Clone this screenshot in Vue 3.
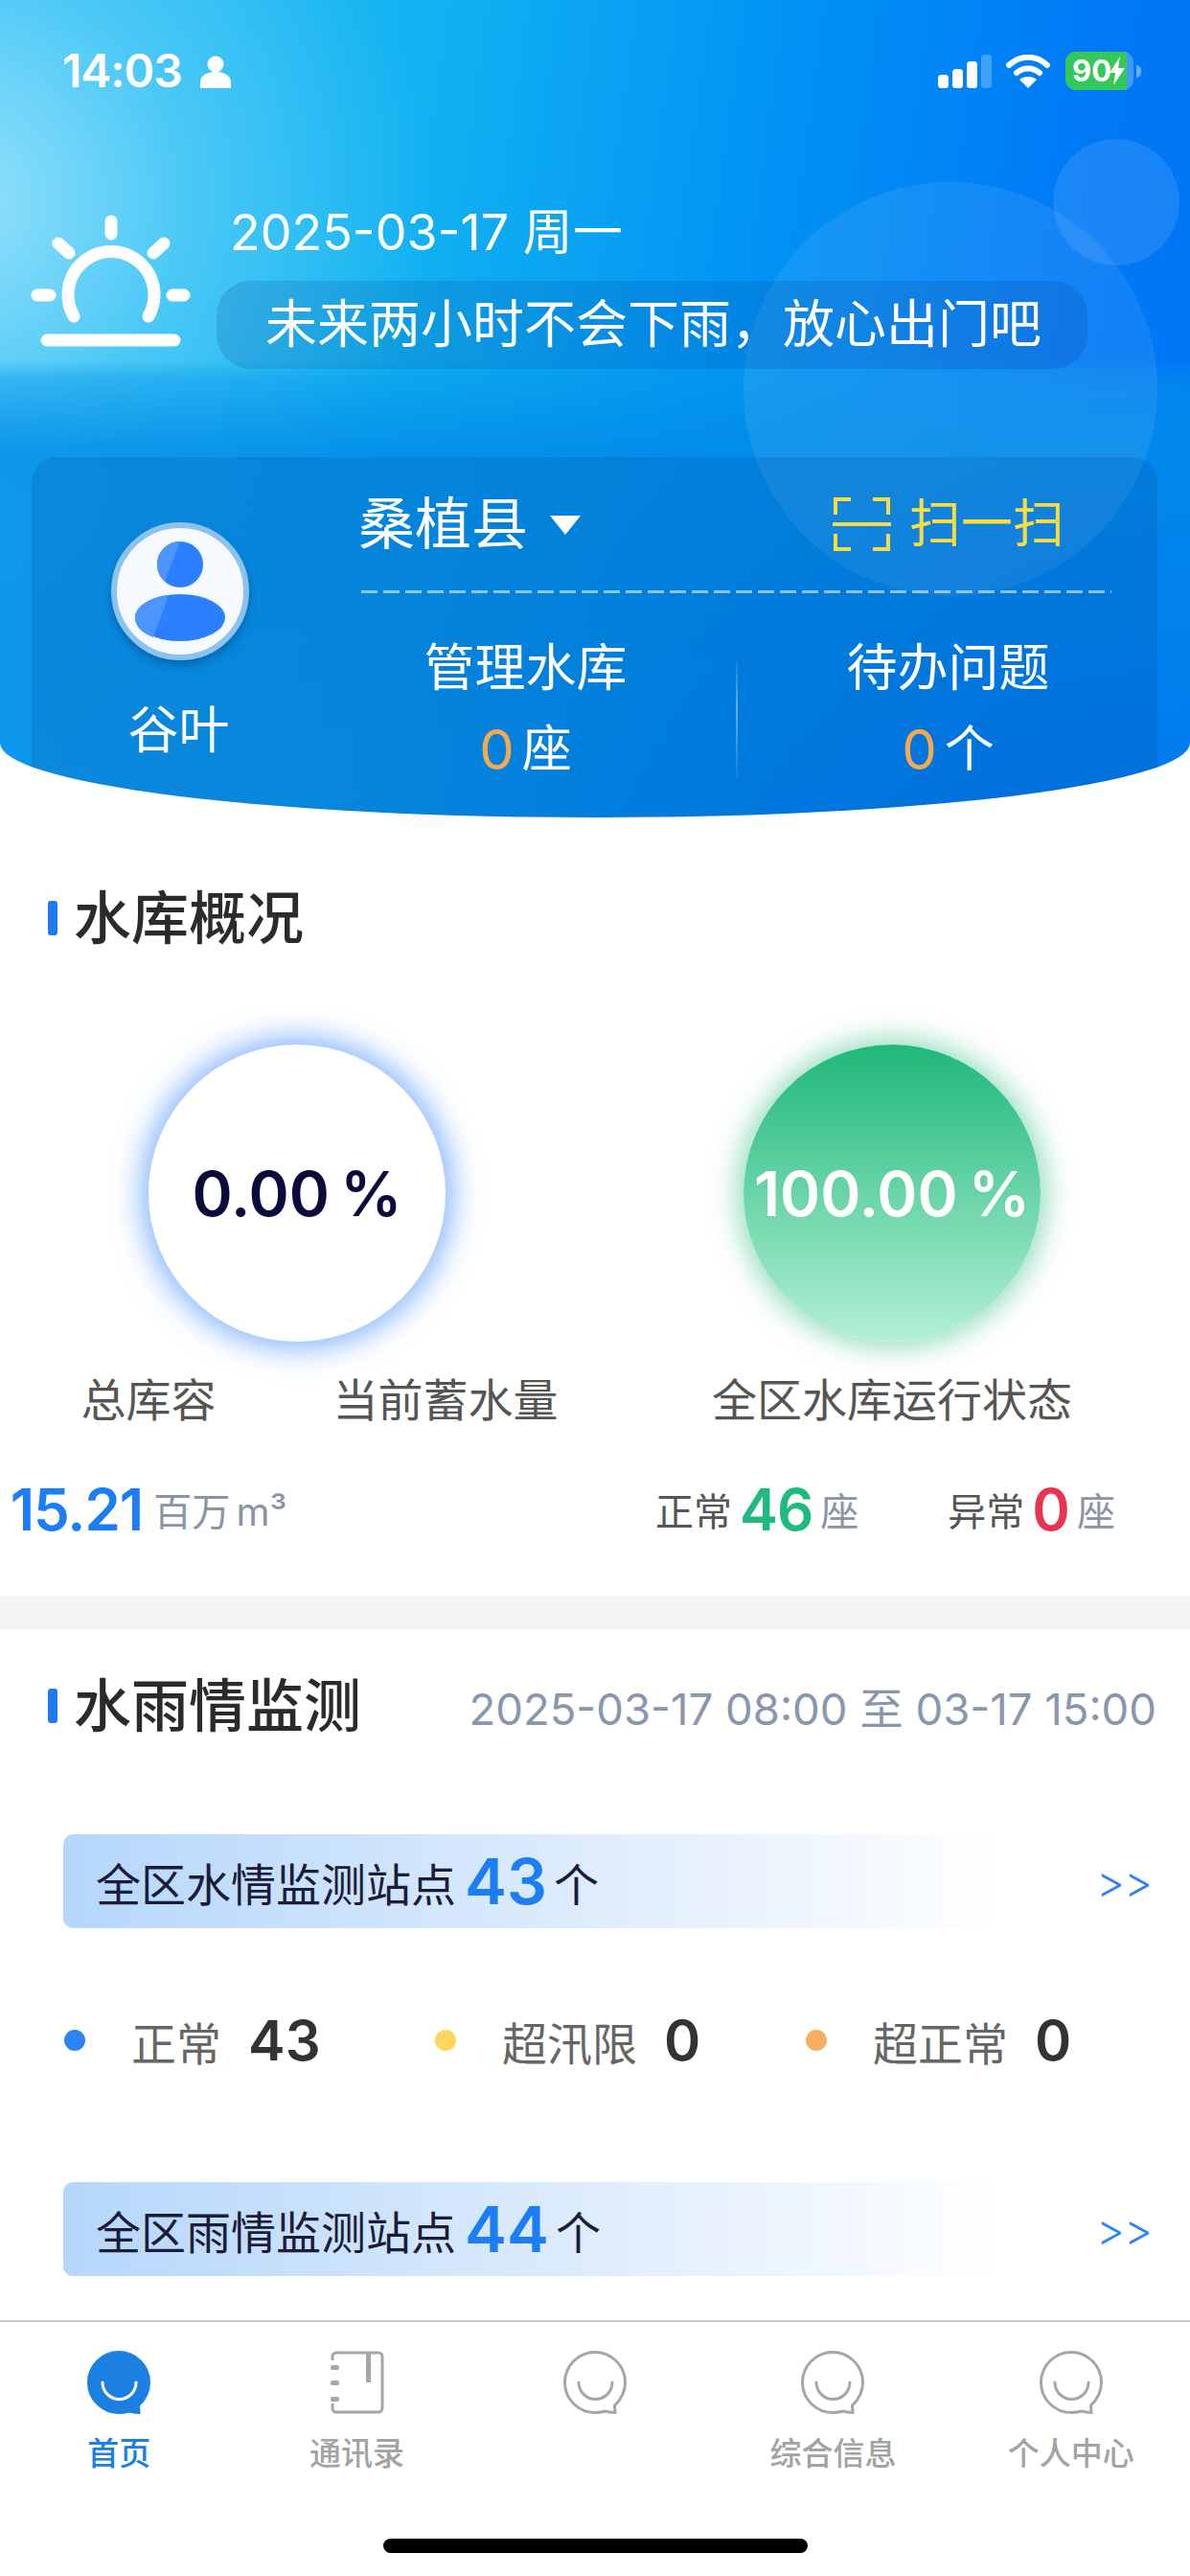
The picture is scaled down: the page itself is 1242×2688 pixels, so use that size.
<script setup>
const stations = [
  { label: '正常', value: 43, color: '#2b84f0' },
  { label: '超汛限', value: 0, color: '#fbd75e' },
  { label: '超正常', value: 0, color: '#f9ae62' },
]
const tabs = [
  { label: '首页', kind: 'solid' },
  { label: '通讯录', kind: 'book' },
  { label: '', kind: 'line' },
  { label: '综合信息', kind: 'line' },
  { label: '个人中心', kind: 'line' },
]
const bubble = 'M33 1.5C15.6 1.5 1.5 15.6 1.5 33S15.6 64.5 33 64.5c4 0 8-.8 11-1.5 3 .8 7 1.300 10 1.500l-.5-7.500C60.500 50.500 64.500 42 64.500 33 64.500 15.600 50.400 1.500 33 1.500z'
</script>

<template>
  <div class="app">
    <header class="hero">
      <i class="orb orb-big"></i>
      <i class="orb orb-small"></i>

      <div class="status">
        <div class="status-left">
          <span class="clock">14:03</span>
          <svg class="status-person" viewBox="0 0 32 34" width="32" height="34">
            <circle cx="16" cy="9" r="8.5" fill="#fff" />
            <path d="M0 34v-6c0-7 6-11 16-11s16 4 16 11v6z" fill="#fff" />
          </svg>
        </div>
        <div class="status-right">
          <svg viewBox="0 0 56 35" width="56" height="35">
            <rect x="0" y="21" width="11" height="14" rx="3.5" fill="#fff" />
            <rect x="15" y="15" width="11" height="20" rx="3.5" fill="#fff" />
            <rect x="30" y="7" width="11" height="28" rx="3.5" fill="#fff" />
            <rect x="45" y="0" width="11" height="35" rx="3.5" fill="#fff" fill-opacity=".25" />
          </svg>
          <svg class="wifi" viewBox="0 0 46 35" width="46" height="35">
            <path d="M3 11C15 0 31 0 43 11" fill="none" stroke="#fff" stroke-width="6" stroke-linecap="round" />
            <path d="M11 19c7-6 17-6 24 0" fill="none" stroke="#fff" stroke-width="6" stroke-linecap="round" />
            <path d="M23 35l-9-9c5-4 13-4 18 0z" fill="#fff" />
          </svg>
          <div class="battery">
            <div class="battery-fill">
              <span>90</span>
              <svg viewBox="0 0 16 30" width="16" height="30">
                <path d="M11 0L0 17h6l-2 13L16 12H9z" fill="#fff" />
              </svg>
            </div>
          </div>
          <i class="battery-nub"></i>
        </div>
      </div>

      <div class="weather">
        <svg class="sun" viewBox="0 0 200 180" width="200" height="180">
          <g fill="none" stroke="#fff" stroke-linecap="round" stroke-width="13">
            <path d="M57 130A45 45 0 1 1 135 130" />
            <path d="M96 31V44M41 54L52 64M151 54L140 64M19 108H32M160 108H172M29 155H162" />
          </g>
        </svg>
        <div class="weather-text">
          <div class="date">2025-03-17 周一</div>
          <div class="pill">未来两小时不会下雨，放心出门吧</div>
        </div>
      </div>

      <section class="card">
        <div class="user">
          <div class="avatar">
            <svg viewBox="0 0 96 104" width="96" height="104">
              <circle cx="48" cy="24" r="24" fill="#2a80ff" />
              <path d="M48 0A24 24 0 0 0 32 42L48 0z" fill="#4d94ff" />
              <ellipse cx="48" cy="79.500" rx="47" ry="24.500" fill="#2a80ff" />
              <path d="M36 56L20 100C8 96 1 88 1 79.500 1 68 16 58 36 56z" fill="#4d94ff" />
            </svg>
          </div>
          <div class="user-name">谷叶</div>
        </div>
        <div class="info">
          <div class="info-top">
            <div class="county">
              <span>桑植县</span>
              <i class="caret"></i>
            </div>
            <div class="scan">
              <svg viewBox="0 0 61 56" width="61" height="56">
                <g fill="none" stroke="#f8dc44" stroke-width="4">
                  <path d="M19 2H3v16M42 2h16v16M3 38v16h16M58 38v16H42" />
                  <path d="M1 28H60" stroke-linecap="round" />
                </g>
              </svg>
              <span>扫一扫</span>
            </div>
          </div>
          <div class="dash"></div>
          <div class="stats">
            <div class="stat">
              <div class="stat-label">管理水库</div>
              <div class="stat-value"><b>0</b>座</div>
            </div>
            <i class="stat-divider"></i>
            <div class="stat">
              <div class="stat-label">待办问题</div>
              <div class="stat-value"><b>0</b>个</div>
            </div>
          </div>
        </div>
      </section>
    </header>

    <main class="main">
      <section class="overview">
        <h2 class="title">水库概况</h2>
        <div class="gauges">
          <div class="gauge-col">
            <div class="gauge gauge-blue">0.00 %</div>
            <div class="pair">
              <div class="gauge-label">总库容</div>
              <div class="gauge-label">当前蓄水量</div>
            </div>
            <div class="pair">
              <div class="metric"><b class="num-blue">15.21</b><span class="unit">百万 m³</span></div>
            </div>
          </div>
          <div class="gauge-col">
            <div class="gauge gauge-green">100.00 %</div>
            <div class="gauge-label">全区水库运行状态</div>
            <div class="status-counts">
              <div class="metric"><em>正常</em><b class="num-green">46</b><span>座</span></div>
              <div class="metric"><em>异常</em><b class="num-red">0</b><span>座</span></div>
            </div>
          </div>
        </div>
      </section>

      <div class="band"></div>

      <section class="monitor">
        <div class="monitor-head">
          <h2 class="title">水雨情监测</h2>
          <span class="range">2025-03-17 08:00 至 03-17 15:00</span>
        </div>

        <div class="banner-row first">
          <div class="banner">全区水情监测站点<b>43</b>个</div>
          <span class="more">&gt;&gt;</span>
        </div>
        <div class="station-row">
          <div v-for="s in stations" :key="s.label" class="station">
            <i class="dot" :style="{ background: s.color }"></i>
            <span class="station-label">{{ s.label }}</span>
            <b class="station-value">{{ s.value }}</b>
          </div>
        </div>
        <div class="banner-row second">
          <div class="banner">全区雨情监测站点<b>44</b>个</div>
          <span class="more">&gt;&gt;</span>
        </div>
      </section>
    </main>

    <footer class="tabbar">
      <nav class="tabs">
        <div v-for="t in tabs" :key="t.label + t.kind" class="tab" :class="{ active: t.kind === 'solid' }">
          <svg v-if="t.kind === 'book'" viewBox="0 0 66 66" width="66" height="66">
            <g fill="none" stroke="#a6a6a6" stroke-width="3">
              <path d="M7 10V6a4 4 0 0 1 4-4h44a4 4 0 0 1 4 4v54a4 4 0 0 1-4 4H11a4 4 0 0 1-4-4v-5" />
            </g>
            <rect x="42" y="2" width="5" height="31" fill="#a6a6a6" />
            <rect x="5" y="15" width="9" height="5" rx="2" fill="#a6a6a6" />
            <rect x="5" y="31" width="9" height="5" rx="2" fill="#a6a6a6" />
            <rect x="5" y="48" width="9" height="5" rx="2" fill="#a6a6a6" />
          </svg>
          <svg v-else viewBox="0 0 66 66" width="66" height="66">
            <path
              :d="bubble"
              :fill="t.kind === 'solid' ? '#1b80e2' : 'none'"
              :stroke="t.kind === 'solid' ? '#1b80e2' : '#a6a6a6'"
              stroke-width="3"
            />
            <path
              d="M16 33a17.500 17.500 0 0 0 35 0"
              fill="none"
              :stroke="t.kind === 'solid' ? '#fff' : '#a6a6a6'"
              stroke-width="3"
              stroke-linecap="round"
            />
          </svg>
          <span class="tab-label">{{ t.label }}</span>
        </div>
      </nav>
      <div class="home-indicator"></div>
    </footer>
  </div>
</template>

<style>
html, body { margin: 0; background: #fff; }
</style>

<style scoped>
.app {
  width: 1242px;
  height: 2688px;
  display: flex;
  flex-direction: column;
  overflow: hidden;
  background: #fff;
  font-family: Inter, "Noto Sans CJK SC", sans-serif;
  color: #333;
}
h2, b, em, i { margin: 0; font-style: normal; }

.hero {
  position: relative;
  flex: none;
  height: 853px;
  overflow: hidden;
  color: #fff;
  border-radius: 0 0 50% 50% / 0 0 78px 78px;
  background:
    linear-gradient(180deg, rgba(5, 150, 232, 0) 0 376px, rgba(5, 150, 232, .42) 394px, rgba(2, 140, 232, .82) 470px, rgba(0, 125, 232, .55) 100%),
    radial-gradient(ellipse 500px 470px at -50px 210px, rgba(170, 232, 252, .85), rgba(130, 220, 250, .45) 50%, rgba(60, 190, 245, 0) 100%),
    linear-gradient(98deg, #25bbf4 0%, #13b3f1 32%, #0092f5 62%, #0079f6 85%, #0075f5 100%);
}
.orb { position: absolute; border-radius: 50%; background: rgba(255, 255, 255, .08); }
.orb-big { left: 776px; top: 190px; width: 432px; height: 432px; }
.orb-small { left: 1099px; top: 145px; width: 132px; height: 132px; background: rgba(255, 255, 255, .1); }

.status {
  position: relative;
  height: 40px;
  padding: 54px 51px 0 65px;
  display: flex;
  justify-content: space-between;
  align-items: center;
}
.status-left { display: flex; align-items: center; gap: 19px; }
.clock { font-size: 48px; font-weight: 600; line-height: 40px; letter-spacing: -1px; }
.status-person { margin-top: 2px; }
.status-right { display: flex; align-items: center; }
.wifi { margin-left: 15px; }
.battery {
  margin-left: 16px;
  width: 71px;
  height: 40px;
  border-radius: 11px;
  background: rgba(255, 255, 255, .25);
  overflow: hidden;
}
.battery-fill {
  width: 64px;
  height: 40px;
  padding-left: 7px;
  box-sizing: border-box;
  background: #34c759;
  display: flex;
  align-items: center;
  font-size: 31px;
  font-weight: 700;
  line-height: 40px;
  white-space: nowrap;
}
.battery-fill svg { flex: none; margin-left: -2px; }
.battery-nub {
  width: 5px;
  height: 13px;
  margin-left: 3px;
  border-radius: 0 5px 5px 0;
  background: rgba(255, 255, 255, .4);
}

.weather {
  position: relative;
  display: flex;
  height: 185px;
  margin-top: 106px;
  padding-left: 20px;
}
.sun { flex: none; }
.weather-text { flex: none; width: 909px; margin-left: 6px; }
.date { height: 93px; padding: 15px 0 0 14px; box-sizing: border-box; font-size: 52px; line-height: 56px; white-space: nowrap; }
.pill {
  height: 92px;
  padding-left: 51px;
  box-sizing: border-box;
  border-radius: 36px;
  background: rgba(0, 60, 140, .17);
  font-size: 54px;
  line-height: 92px;
  white-space: nowrap;
}

.card {
  position: relative;
  margin: 92px 34px 0 33px;
  height: 400px;
  display: flex;
  border-radius: 26px 26px 0 0;
  background: rgba(0, 50, 130, .14);
}
.user { flex: none; width: 310px; display: flex; flex-direction: column; align-items: center; padding-top: 68px; box-sizing: border-box; }
.avatar {
  width: 144px;
  height: 144px;
  box-sizing: border-box;
  border: 6px solid #8cc2ee;
  border-radius: 50%;
  background: #f6faff;
  box-shadow: 0 5px 8px rgba(0, 40, 100, .35);
  display: flex;
  align-items: center;
  justify-content: center;
}
.user-name { margin-top: 43px; font-size: 53px; line-height: 60px; margin-right: 3px; }

.info { flex: none; width: 783px; margin-left: 34px; padding-top: 35px; }
.info-top { height: 70px; display: flex; justify-content: space-between; align-items: center; padding-right: 49px; }
.county { display: flex; align-items: center; gap: 23px; margin-left: -3px; font-size: 59px; line-height: 70px; }
.caret {
  width: 0;
  height: 0;
  margin-top: 2px;
  border-left: 16px solid transparent;
  border-right: 16px solid transparent;
  border-top: 20px solid #fff;
}
.scan { display: flex; align-items: center; gap: 19px; color: #f8dc44; font-size: 54px; line-height: 70px; }
.dash {
  height: 3px;
  margin-top: 34px;
  background: repeating-linear-gradient(90deg, rgba(255, 255, 255, .55) 0 17px, transparent 17px 23px);
}
.stats { display: flex; width: 880px; margin: 46px 0 0 -48px; position: relative; }
.stat { flex: 1; text-align: center; }
.stat-label { font-size: 53px; line-height: 64px; }
.stat-value { margin-top: 21px; font-size: 52px; line-height: 64px; display: flex; justify-content: center; align-items: center; gap: 8px; }
.stat-value b { font-weight: 400; font-size: 58px; color: #f5a94c; }
.stat-divider {
  flex: none;
  width: 2px;
  height: 124px;
  margin-top: 24px;
  background: linear-gradient(180deg, rgba(255, 255, 255, .05), rgba(255, 255, 255, .4) 40%, rgba(255, 255, 255, .05));
}

.main { flex: 1; min-height: 0; overflow: hidden; }
.title {
  position: relative;
  padding-left: 27px;
  font-size: 60px;
  font-weight: 500;
  line-height: 70px;
  color: #2b2b2b;
}
.title::before {
  content: "";
  position: absolute;
  left: 0;
  top: 17px;
  width: 10px;
  height: 36px;
  border-radius: 3px;
  background: #1d7cf2;
}
.overview { padding: 70px 0 55px; }
.overview > .title { margin-left: 50px; }
.gauges { display: flex; margin-top: 97px; }
.gauge-col { flex: none; width: 620px; display: flex; flex-direction: column; align-items: center; }
.gauge-col:first-child { width: 620px; }
.gauge-col:last-child { width: 622px; }
.gauge {
  width: 310px;
  height: 310px;
  border-radius: 50%;
  display: flex;
  align-items: center;
  justify-content: center;
  font-size: 64px;
  font-weight: 600;
  white-space: nowrap;
  word-spacing: -5px;
  margin-bottom: 31px;
}
.gauge-blue { color: #0a0a3c; background: #fff; box-shadow: 0 0 30px 8px rgba(40, 125, 250, .55); }
.gauge-green {
  color: #fff;
  background: linear-gradient(180deg, #1fb87b 0%, #b3f0d5 100%);
  box-shadow: 0 0 28px 7px rgba(50, 190, 130, .5);
}
.gauge-label { font-size: 47px; line-height: 60px; color: #555; text-align: center; }
.pair { display: flex; width: 620px; }
.pair > * { flex: none; width: 310px; }
.pair + .pair { margin-top: 49px; height: 70px; }
.metric { display: flex; align-items: center; justify-content: center; height: 70px; white-space: nowrap; gap: 8px; }
.metric b { font-size: 60px; font-weight: 600; letter-spacing: -1px; }
.metric span { font-size: 40px; color: #8a94a8; }
.metric .unit { margin-left: 3px; word-spacing: -5px; }
.metric em { font-size: 40px; color: #555; }
.num-blue { color: #1c7df4; }
.num-green { color: #1fba7e; }
.num-red { color: #e8344e; }
.status-counts { align-self: flex-start; display: flex; gap: 93px; margin-top: 49px; padding-left: 64px; }

.band { height: 35px; background: #f5f5f5; }

.monitor { padding-top: 45px; }
.monitor-head { display: flex; justify-content: space-between; align-items: center; padding: 0 35px 0 50px; }
.range { font-size: 45.500px; color: #8996ab; white-space: nowrap; }
.banner-row { display: flex; align-items: center; justify-content: space-between; height: 98px; padding: 0 40px 0 66px; }
.banner-row.first { margin-top: 99px; }
.banner-row.second { margin-top: 113px; }
.banner {
  width: 979px;
  height: 98px;
  box-sizing: border-box;
  padding-left: 34px;
  border-radius: 10px;
  background: linear-gradient(90deg, #b5d7fb 0%, #cfe4fc 35%, #e4f0fd 65%, #fff 100%);
  display: flex;
  align-items: center;
  font-size: 47px;
  color: #1b1b3a;
}
.banner b { margin: 0 7px 0 9px; font-size: 66px; font-weight: 600; color: #1c7df4; }
.more { font-size: 46px; font-weight: 300; color: #2c86ee; letter-spacing: -1px; }
.station-row { display: grid; grid-template-columns: repeat(3, 387px); height: 70px; margin: 82px 0 0 67px; }
.station { display: flex; align-items: center; }
.dot { flex: none; width: 22px; height: 22px; border-radius: 50%; }
.station-label { margin-left: 48px; font-size: 47px; color: #666; }
.station-value { margin-left: 28px; font-size: 58px; font-weight: 600; color: #333; }

.tabbar { flex: none; height: 267px; box-sizing: border-box; border-top: 2px solid #c9c9c9; background: #fff; padding-top: 30px; }
.tabs { display: grid; grid-template-columns: repeat(5, 1fr); }
.tab { display: flex; flex-direction: column; align-items: center; color: #a3a3a3; }
.tab.active { color: #1b80e2; }
.tab svg { display: block; }
.tab-label { height: 40px; margin-top: 21px; font-size: 33px; font-weight: 500; line-height: 40px; }
.home-indicator { width: 443px; height: 15px; margin: 69px auto 0; border-radius: 8px; background: #000; }
</style>
